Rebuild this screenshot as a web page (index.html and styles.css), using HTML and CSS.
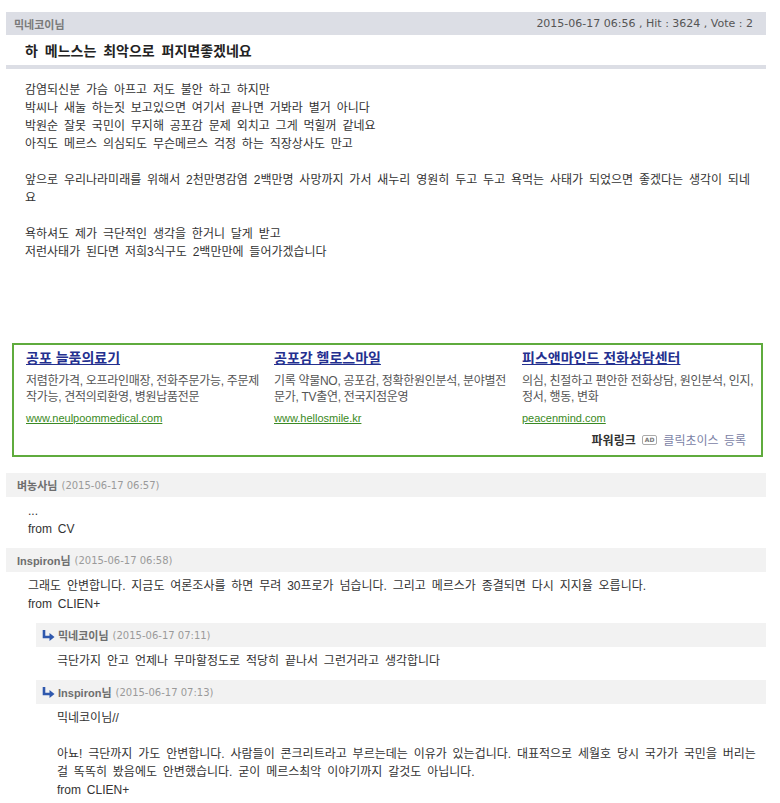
FILE: index.html
```html
<!DOCTYPE html>
<html lang="ko">
<head>
<meta charset="utf-8">
<title>하 메느스는 최악으로 퍼지면좋겠네요</title>
<link rel="stylesheet" href="styles.css">
</head>
<body>
<div class="page">
  <div class="post-head">
    <span class="post-author">믹네코이님</span>
    <span class="post-meta">2015-06-17 06:56 , Hit : 3624 , Vote : 2</span>
  </div>
  <h1 class="post-title">하 메느스는 최악으로 퍼지면좋겠네요</h1>
  <div class="post-body">
    <p>감염되신분 가슴 아프고 저도 불안 하고 하지만<br>박씨나 새눌 하는짓 보고있으면 여기서 끝나면 거봐라 별거 아니다<br>박원순 잘못 국민이 무지해 공포감 문제 외치고 그게 먹힐꺼 같네요<br>아직도 메르스 의심되도 무슨메르스 걱정 하는 직장상사도 만고</p>
    <p>앞으로 우리나라미래를 위해서 2천만명감염 2백만명 사망까지 가서 새누리 영원히 두고 두고 욕먹는 사태가 되었으면 좋겠다는 생각이 되네요</p>
    <p>욕하셔도 제가 극단적인 생각을 한거니 달게 받고<br>저런사태가 된다면 저희3식구도 2백만만에 들어가겠습니다</p>
  </div>

  <div class="ad-box">
    <div class="ad-cols">
      <div class="ad">
        <a class="ad-title" href="#">공포 늘품의료기</a>
        <div class="ad-desc">저렴한가격, 오프라인매장, 전화주문가능, 주문제<br>작가능, 견적의뢰환영, 병원납품전문</div>
        <a class="ad-url" href="#">www.neulpoommedical.com</a>
      </div>
      <div class="ad">
        <a class="ad-title" href="#">공포감 헬로스마일</a>
        <div class="ad-desc">기록 약물NO, 공포감, 정확한원인분석, 분야별전<br>문가, TV출연, 전국지점운영</div>
        <a class="ad-url" href="#">www.hellosmile.kr</a>
      </div>
      <div class="ad">
        <a class="ad-title" href="#">피스앤마인드 전화상담센터</a>
        <div class="ad-desc">의심, 친절하고 편안한 전화상담, 원인분석, 인지,<br>정서, 행동, 변화</div>
        <a class="ad-url" href="#">peacenmind.com</a>
      </div>
    </div>
    <div class="ad-foot">
      <span class="ad-brand">파워링크</span>
      <span class="ad-badge">AD</span>
      <span class="ad-reg">클릭초이스 등록</span>
    </div>
  </div>

  <div class="comments">
    <div class="comment">
      <div class="c-head"><span class="c-name">벼농사님</span><span class="c-date">(2015-06-17 06:57)</span></div>
      <div class="c-body">...<br>from CV</div>
    </div>
    <div class="comment">
      <div class="c-head"><span class="c-name"><span class="latin">Inspiron</span>님</span><span class="c-date">(2015-06-17 06:58)</span></div>
      <div class="c-body">그래도 안변합니다. 지금도 여론조사를 하면 무려 30프로가 넘습니다. 그리고 메르스가 종결되면 다시 지지율 오릅니다.<br>from CLIEN+</div>
    </div>
    <div class="comment reply">
      <div class="c-head"><svg class="arrow" width="13" height="11" viewBox="0 0 13 11"><path d="M2 0V7H8" fill="none" stroke="#2f58ad" stroke-width="2.6"/><path d="M7.5 3L12.5 7L7.5 11Z" fill="#2f58ad"/></svg><span class="c-name">믹네코이님</span><span class="c-date">(2015-06-17 07:11)</span></div>
      <div class="c-body">극단가지 안고 언제나 무마할정도로 적당히 끝나서 그런거라고 생각합니다</div>
    </div>
    <div class="comment reply">
      <div class="c-head"><svg class="arrow" width="13" height="11" viewBox="0 0 13 11"><path d="M2 0V7H8" fill="none" stroke="#2f58ad" stroke-width="2.6"/><path d="M7.5 3L12.5 7L7.5 11Z" fill="#2f58ad"/></svg><span class="c-name"><span class="latin">Inspiron</span>님</span><span class="c-date">(2015-06-17 07:13)</span></div>
      <div class="c-body">믹네코이님//<br><br>아뇨! 극단까지 가도 안변합니다. 사람들이 콘크리트라고 부르는데는 이유가 있는겁니다. 대표적으로 세월호 당시 국가가 국민을 버리는 걸 똑똑히 봤음에도 안변했습니다. 굳이 메르스최악 이야기까지 갈것도 아닙니다.<br>from CLIEN+</div>
    </div>
  </div>
</div>
</body>
</html>
```

FILE: styles.css
```css
html, body {
  margin: 0;
  padding: 0;
  background: #fff;
}
body {
  font-family: "Liberation Sans", "Noto Sans CJK KR", sans-serif;
  font-size: 12px;
  color: #333;
}
.page {
  width: 760px;
  margin-left: 6px;
  padding-top: 12px;
}
.post-head {
  height: 23px;
  background: #dcdee5;
  display: flex;
  justify-content: space-between;
  align-items: center;
  padding: 0 13px 0 8px;
}
.post-author {
  font-family: "Noto Sans CJK KR", sans-serif;
  font-size: 11px;
  font-weight: bold;
  color: #7a7a7a;
}
.post-meta {
  font-family: "DejaVu Sans", sans-serif;
  font-size: 11px;
  color: #555;
}
.post-title {
  margin: 0;
  height: 30px;
  display: flex;
  align-items: center;
  padding-left: 19px;
  font-family: "Liberation Sans", "Noto Sans CJK KR", sans-serif;
  font-size: 14px;
  font-weight: bold;
  color: #222;
  word-spacing: 3px;
  border-bottom: 4px solid #dcdee5;
}
.post-body {
  padding: 12px 12px 82px 19px;
  line-height: 18px;
  word-spacing: 2.5px;
  color: #333;
}
.post-body p {
  margin: 0 0 18px;
}
.post-body p:last-child {
  margin-bottom: 0;
}

.ad-box {
  width: 747px;
  margin-left: 6px;
  border: 2px solid #5fab3d;
  padding: 4px 0 8px;
}
.ad-cols {
  display: grid;
  grid-template-columns: repeat(3, 235px);
  column-gap: 13px;
  padding-left: 12px;
}
.ad {
  display: flex;
  flex-direction: column;
  align-items: flex-start;
}
.ad-title {
  font-size: 14px;
  line-height: 18px;
  font-weight: bold;
  color: #24308f;
  text-decoration: underline;
}
.ad-desc {
  margin-top: 6px;
  font-size: 12px;
  line-height: 16px;
  color: #555;
  white-space: nowrap;
  letter-spacing: -0.3px;
}
.ad-url {
  margin-top: 6px;
  font-size: 11px;
  line-height: 14px;
  color: #3a8a24;
  text-decoration: underline;
}
.ad-foot {
  margin-top: 8px;
  display: flex;
  justify-content: flex-end;
  align-items: center;
  gap: 6px;
  padding-right: 15px;
  line-height: 14px;
}
.ad-brand {
  font-family: "Noto Sans CJK KR", sans-serif;
  font-size: 12px;
  font-weight: bold;
  color: #333;
}
.ad-badge {
  font-family: "DejaVu Sans", sans-serif;
  font-size: 6px;
  font-weight: bold;
  line-height: 8px;
  color: #777;
  border: 1px solid #aaa;
  border-radius: 2px;
  padding: 0 2px;
}
.ad-reg {
  font-family: "Noto Sans CJK KR", sans-serif;
  font-size: 12px;
  color: #7b82a6;
  word-spacing: 2px;
}

.comments {
  margin-top: 16px;
}
.c-head {
  height: 24px;
  background: #f2f2f2;
  display: flex;
  align-items: center;
  padding-left: 11px;
}
.c-name {
  font-family: "Noto Sans CJK KR", sans-serif;
  font-size: 11px;
  font-weight: bold;
  color: #6e6e6e;
}
.c-name .latin {
  font-family: "Liberation Sans", sans-serif;
  font-size: 11px;
}
.c-date {
  margin-left: 4px;
  font-family: "DejaVu Sans", sans-serif;
  font-size: 10px;
  color: #9a9a9a;
}
.c-body {
  padding: 5px 0 10px 22px;
  line-height: 18px;
  word-spacing: 2.5px;
  color: #333;
}
.reply {
  margin-left: 30px;
}
.reply .c-head {
  padding-left: 6px;
}
.reply .c-body {
  padding-left: 21px;
}
.arrow {
  margin-right: 3px;
}
```
